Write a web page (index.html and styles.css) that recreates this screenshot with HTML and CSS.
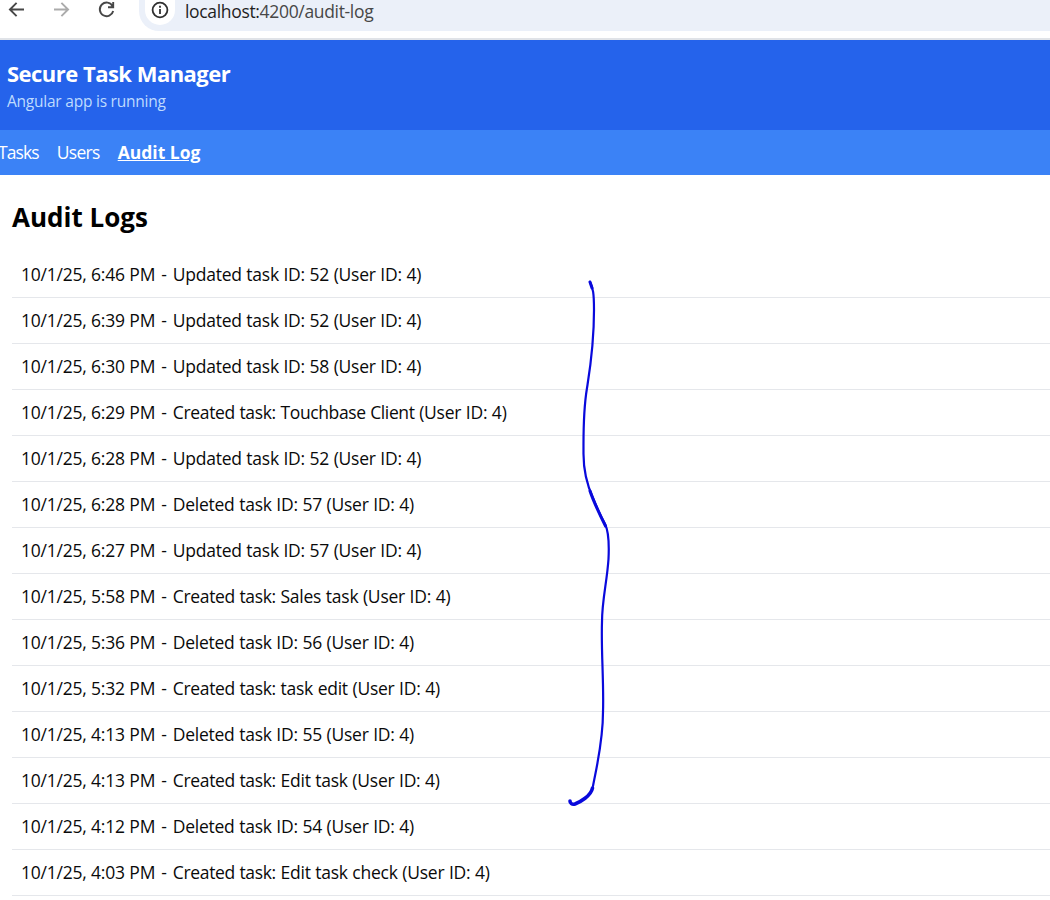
FILE: index.html
```html
<!DOCTYPE html>
<html lang="en">
<head>
<meta charset="utf-8">
<title>Secure Task Manager</title>
<link rel="stylesheet" href="styles.css">
</head>
<body>
<div class="browser-bar">
  <svg class="controls" width="130" height="38" viewBox="0 0 130 38" fill="none" stroke-width="1.9">
    <path stroke="#474747" d="M24 9.5H10M16.6 2.8 9.9 9.5l6.7 6.7"/>
    <path stroke="#ababab" d="M54 9.5h14M61.4 2.8l6.7 6.7-6.7 6.7"/>
    <path stroke="#474747" d="M112.600 6.200A6.800 6.800 0 1 0 113.200 11M113.200 2v5.200H108"/>
  </svg>
  <div class="address">
    <span class="info"><svg width="18" height="18" viewBox="0 0 18 18" fill="none" stroke="#303030" stroke-width="1.8"><circle cx="9" cy="9" r="7.4"/><path d="M9 8v5M9 4.800v1.900"/></svg></span>
    <span class="url"><span class="host">localhost:</span>4200/audit-log</span>
  </div>
</div>
<header class="app-header">
  <h1>Secure Task Manager</h1>
  <p>Angular app is running</p>
</header>
<nav class="app-nav"><a>Tasks</a><a>Users</a><a class="active">Audit Log</a></nav>
<main class="content">
  <h2>Audit Logs</h2>
  <ul class="logs">
    <li>10/1/25, 6:46 PM <span class="dash">-</span> Updated task ID: 52 (User ID: 4)</li>
    <li>10/1/25, 6:39 PM <span class="dash">-</span> Updated task ID: 52 (User ID: 4)</li>
    <li>10/1/25, 6:30 PM <span class="dash">-</span> Updated task ID: 58 (User ID: 4)</li>
    <li>10/1/25, 6:29 PM <span class="dash">-</span> <span class="created">Created task:</span> <span class="tight">Touchbase Client</span> (User ID: 4)</li>
    <li>10/1/25, 6:28 PM <span class="dash">-</span> Updated task ID: 52 (User ID: 4)</li>
    <li>10/1/25, 6:28 PM <span class="dash">-</span> Deleted task ID: 57 (User ID: 4)</li>
    <li>10/1/25, 6:27 PM <span class="dash">-</span> Updated task ID: 57 (User ID: 4)</li>
    <li>10/1/25, 5:58 PM <span class="dash">-</span> <span class="created">Created task:</span> Sales task (User ID: 4)</li>
    <li>10/1/25, 5:36 PM <span class="dash">-</span> Deleted task ID: 56 (User ID: 4)</li>
    <li>10/1/25, 5:32 PM <span class="dash">-</span> <span class="created">Created task:</span> task edit (User ID: 4)</li>
    <li>10/1/25, 4:13 PM <span class="dash">-</span> Deleted task ID: 55 (User ID: 4)</li>
    <li>10/1/25, 4:13 PM <span class="dash">-</span> <span class="created">Created task:</span> Edit task (User ID: 4)</li>
    <li>10/1/25, 4:12 PM <span class="dash">-</span> Deleted task ID: 54 (User ID: 4)</li>
    <li>10/1/25, 4:03 PM <span class="dash">-</span> <span class="created">Created task:</span> Edit task check (User ID: 4)</li>
  </ul>
</main>
<svg class="pen" width="60" height="540" viewBox="560 270 60 540" fill="none" stroke="#0909dc" stroke-linecap="round" stroke-linejoin="round">
  <path stroke-width="2.2" d="M590 282C593 288 594 293 594 310C594 346 590 369 587 388C583 412 583.5 430 583.5 454C583.5 474 588 487 593 498C597 508 601 517 605 524C609 532 609 549 608.5 559C607 582 602 600 602 622C601 650 604 683 603 712C603 741 597 765 593 786"/>
  <path stroke-width="3" d="M590 282l2 6M590 491C594 503 600 515 605.500 526"/>
  <path stroke-width="3.6" d="M592.500 788C591 796 580 802 575 804C572 805 570 803 570 801"/>
</svg>
</body>
</html>
```
FILE: styles.css
```css
* { box-sizing: border-box; }
body { margin: 0; height: 900px; overflow: hidden; background: #fff; color: #0a0a0a; font: 17.5px/27px "Open Sans", "Noto Sans", sans-serif; }
.browser-bar { height: 40px; border-bottom: 2px solid #e0e3e8; display: flex; }
.controls { flex: none; margin-right: 9px; }
.address { flex: 1; height: 31px; background: #ebf0f9; border-radius: 0 0 0 20px; display: flex; padding-left: 6px; }
.info { width: 30px; height: 25px; background: #fff; border-radius: 0 0 15px 15px; display: flex; justify-content: center; padding-top: 1px; }
.url { margin-left: 10px; line-height: 22px; color: #474747; font-size: 17.5px; letter-spacing: -.33px; white-space: nowrap; }
.host { color: #1f1f1f; }
.app-header { height: 90px; background: #2563eb; padding: 19px 7px 0; }
h1, h2, p { margin: 0; }
h1 { color: #fff; font-size: 22px; line-height: 28px; letter-spacing: -.52px; }
p { color: #bfdbfe; font-size: 15.5px; line-height: 29px; letter-spacing: -.23px; }
.app-nav { height: 45px; background: #3b82f6; color: #fff; display: flex; gap: 18px; line-height: 45px; }
.app-nav a { letter-spacing: -.7px; }
.app-nav a:first-child { margin-left: -2px; letter-spacing: -.9px; }
.app-nav .active { font-weight: 700; text-decoration: underline; letter-spacing: 0; }
.content { padding: 24px 0 0 12px; }
h2 { color: #000; font-size: 26px; line-height: 36px; }
.logs { list-style: none; margin: 17px 0 0; padding: 0; }
.logs li { height: 46px; padding: 9px; border-bottom: 1px solid #e5e7eb; white-space: nowrap; letter-spacing: -.24px; word-spacing: .3px; }
.logs .dash { margin: 0 1.6px 0 1.4px; }
.logs .created { letter-spacing: -.33px; }
.logs .tight { letter-spacing: -.38px; }
.pen { position: absolute; left: 560px; top: 270px; }
```
